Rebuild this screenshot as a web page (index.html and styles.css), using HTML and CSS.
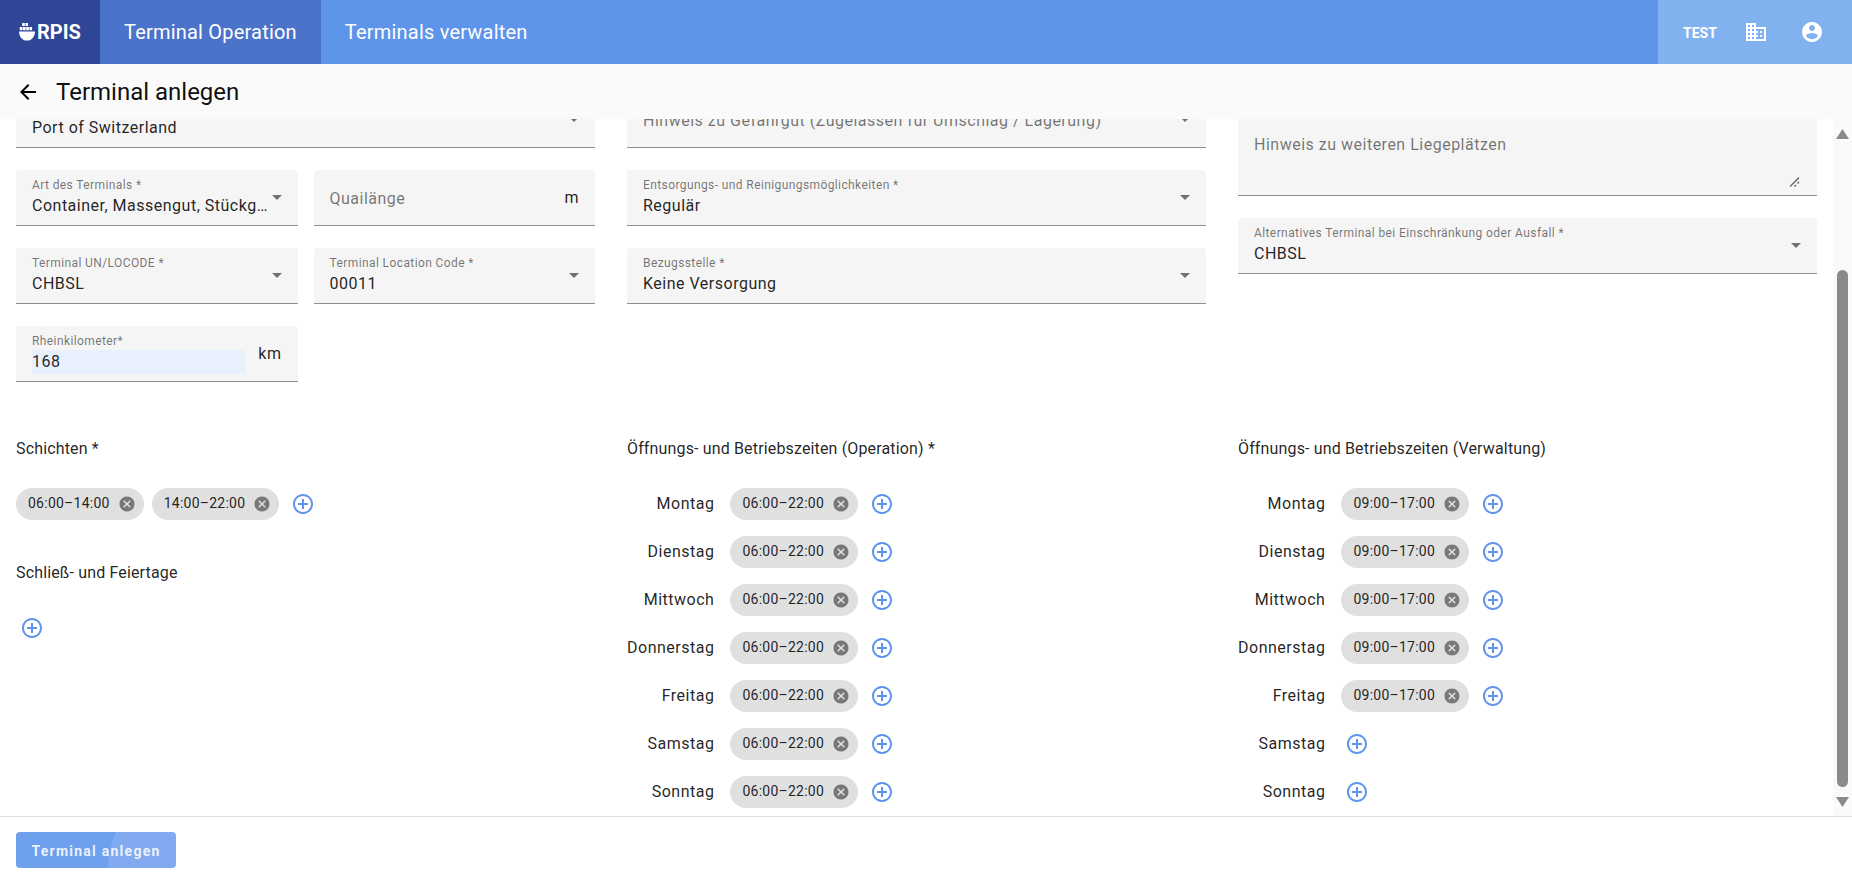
FILE: index.html
```html
<!DOCTYPE html>
<html lang="de">
<head>
	<meta charset="UTF-8">
	<title>Terminal anlegen</title>
	<link rel="stylesheet" href="styles.css">
</head>
<body>
	<svg class="defs" width="0" height="0">
		<symbol id="caret" viewBox="0 0 10 5"><path d="M0 0h10L5 5z"/></symbol>
		<symbol id="cancel" viewBox="0 0 24 24"><path d="M12 2C6.47 2 2 6.47 2 12s4.47 10 10 10 10-4.47 10-10S17.53 2 12 2zm5 13.59L15.59 17 12 13.41 8.41 17 7 15.59 10.59 12 7 8.41 8.41 7 12 10.59 15.59 7 17 8.41 13.41 12 17 15.59z"/></symbol>
		<symbol id="add" viewBox="0 0 24 24"><path d="M13 7h-2v4H7v2h4v4h2v-4h4v-2h-4V7zm-1-5C6.48 2 2 6.48 2 12s4.48 10 10 10 10-4.48 10-10S17.52 2 12 2zm0 18c-4.41 0-8-3.59-8-8s3.59-8 8-8 8 3.59 8 8-3.59 8-8 8z"/></symbol>
	</svg>

	<header class="topbar">
		<a class="logo" href="#">
			<svg class="logo-ship" viewBox="0 0 16 18"><path d="M3.2 0h2.6v3H3.200zM6.400 0H9v3H6.400zM.8 4h2.700v3.200H.8zM4 4h2.700v3.200H4zM7.200 4h2.700v3.200H7.200zM10.400 4h2.700v3.200h-2.700zM0 8.400h16c0 5-3.200 9.100-8 9.100S0 13.400 0 8.400z"/></svg>
			<span>RPIS</span>
		</a>
		<a class="tab tab-active" href="#">Terminal Operation</a>
		<a class="tab" href="#">Terminals verwalten</a>
		<div class="topbar-right">
			<span class="env">TEST</span>
			<svg class="top-icon" viewBox="0 0 24 24"><path d="M12 7V3H2v18h20V7H12zM6 19H4v-2h2v2zm0-4H4v-2h2v2zm0-4H4V9h2v2zm0-4H4V5h2v2zm4 12H8v-2h2v2zm0-4H8v-2h2v2zm0-4H8V9h2v2zm0-4H8V5h2v2zm10 12h-8v-2h2v-2h-2v-2h2v-2h-2V9h8v10zm-2-8h-2v2h2v-2zm0 4h-2v2h2v-2z"/></svg>
			<svg class="top-icon" viewBox="0 0 24 24"><path d="M12 2C6.48 2 2 6.48 2 12s4.48 10 10 10 10-4.48 10-10S17.52 2 12 2zm0 3c1.66 0 3 1.34 3 3s-1.34 3-3 3-3-1.34-3-3 1.34-3 3-3zm0 14.200c-2.500 0-4.710-1.280-6-3.220.030-1.990 4-3.080 6-3.080 1.990 0 5.970 1.090 6 3.080-1.290 1.940-3.500 3.220-6 3.220z"/></svg>
		</div>
	</header>

	<div class="subheader">
		<svg class="back" viewBox="0 0 24 24"><path d="M20 11H7.830l5.590-5.590L12 4l-8 8 8 8 1.410-1.410L7.830 13H20v-2z"/></svg>
		<h1>Terminal anlegen</h1>
	</div>

	<div class="main">
		<div class="content">
			<div class="fields">
				<div class="field-col split">
					<div class="field wide">
						<span class="value">Port of Switzerland</span>
						<svg class="caret"><use href="#caret"/></svg>
					</div>
					<div class="field">
						<label>Art des Terminals *</label>
						<span class="value">Container, Massengut, Stückgut</span>
						<svg class="caret"><use href="#caret"/></svg>
					</div>
					<div class="field empty">
						<span class="placeholder">Quailänge</span>
						<span class="unit">m</span>
					</div>
					<div class="field">
						<label>Terminal UN/LOCODE *</label>
						<span class="value">CHBSL</span>
						<svg class="caret"><use href="#caret"/></svg>
					</div>
					<div class="field">
						<label>Terminal Location Code *</label>
						<span class="value">00011</span>
						<svg class="caret"><use href="#caret"/></svg>
					</div>
					<div class="field">
						<label>Rheinkilometer*</label>
						<span class="value autofill">168</span>
						<span class="unit">km</span>
					</div>
				</div>
				<div class="field-col">
					<div class="field empty">
						<span class="placeholder">Hinweis zu Gefahrgut (Zugelassen für Umschlag / Lagerung)</span>
						<svg class="caret"><use href="#caret"/></svg>
					</div>
					<div class="field">
						<label>Entsorgungs- und Reinigungsmöglichkeiten *</label>
						<span class="value">Regulär</span>
						<svg class="caret"><use href="#caret"/></svg>
					</div>
					<div class="field">
						<label>Bezugsstelle *</label>
						<span class="value">Keine Versorgung</span>
						<svg class="caret"><use href="#caret"/></svg>
					</div>
				</div>
				<div class="field-col">
					<div class="field textarea">
						<span class="placeholder">Hinweis zu weiteren Liegeplätzen</span>
						<svg class="resizer" viewBox="0 0 10 10"><path d="M0 9.500L9 .5M4.500 9.500L6 8M7.500 6.500L9 5"/></svg>
					</div>
					<div class="field">
						<label>Alternatives Terminal bei Einschränkung oder Ausfall *</label>
						<span class="value">CHBSL</span>
						<svg class="caret"><use href="#caret"/></svg>
					</div>
				</div>
			</div>

			<div class="times">
				<section>
					<h2>Schichten *</h2>
					<div class="chips">
						<span class="chip">06:00–14:00<svg><use href="#cancel"/></svg></span>
						<span class="chip">14:00–22:00<svg><use href="#cancel"/></svg></span>
						<svg class="add"><use href="#add"/></svg>
					</div>
					<h2 class="second">Schließ- und Feiertage</h2>
					<div class="chips">
						<svg class="add"><use href="#add"/></svg>
					</div>
				</section>
				<section>
					<h2>Öffnungs- und Betriebszeiten (Operation) *</h2>
					<div class="days">
						<span class="day">Montag</span>
						<div class="chips"><span class="chip">06:00–22:00<svg><use href="#cancel"/></svg></span><svg class="add"><use href="#add"/></svg></div>
						<span class="day">Dienstag</span>
						<div class="chips"><span class="chip">06:00–22:00<svg><use href="#cancel"/></svg></span><svg class="add"><use href="#add"/></svg></div>
						<span class="day">Mittwoch</span>
						<div class="chips"><span class="chip">06:00–22:00<svg><use href="#cancel"/></svg></span><svg class="add"><use href="#add"/></svg></div>
						<span class="day">Donnerstag</span>
						<div class="chips"><span class="chip">06:00–22:00<svg><use href="#cancel"/></svg></span><svg class="add"><use href="#add"/></svg></div>
						<span class="day">Freitag</span>
						<div class="chips"><span class="chip">06:00–22:00<svg><use href="#cancel"/></svg></span><svg class="add"><use href="#add"/></svg></div>
						<span class="day">Samstag</span>
						<div class="chips"><span class="chip">06:00–22:00<svg><use href="#cancel"/></svg></span><svg class="add"><use href="#add"/></svg></div>
						<span class="day">Sonntag</span>
						<div class="chips"><span class="chip">06:00–22:00<svg><use href="#cancel"/></svg></span><svg class="add"><use href="#add"/></svg></div>
					</div>
				</section>
				<section>
					<h2>Öffnungs- und Betriebszeiten (Verwaltung)</h2>
					<div class="days">
						<span class="day">Montag</span>
						<div class="chips"><span class="chip">09:00–17:00<svg><use href="#cancel"/></svg></span><svg class="add"><use href="#add"/></svg></div>
						<span class="day">Dienstag</span>
						<div class="chips"><span class="chip">09:00–17:00<svg><use href="#cancel"/></svg></span><svg class="add"><use href="#add"/></svg></div>
						<span class="day">Mittwoch</span>
						<div class="chips"><span class="chip">09:00–17:00<svg><use href="#cancel"/></svg></span><svg class="add"><use href="#add"/></svg></div>
						<span class="day">Donnerstag</span>
						<div class="chips"><span class="chip">09:00–17:00<svg><use href="#cancel"/></svg></span><svg class="add"><use href="#add"/></svg></div>
						<span class="day">Freitag</span>
						<div class="chips"><span class="chip">09:00–17:00<svg><use href="#cancel"/></svg></span><svg class="add"><use href="#add"/></svg></div>
						<span class="day">Samstag</span>
						<div class="chips"><svg class="add"><use href="#add"/></svg></div>
						<span class="day">Sonntag</span>
						<div class="chips"><svg class="add"><use href="#add"/></svg></div>
					</div>
				</section>
			</div>
		</div>

		<div class="scrollbar">
			<svg class="scroll-arrow" viewBox="0 0 13 10"><path d="M6.500 0L13 10H0z"/></svg>
			<div class="scroll-thumb"></div>
			<svg class="scroll-arrow" viewBox="0 0 13 10"><path d="M0 0h13L6.500 10z"/></svg>
		</div>
	</div>

	<footer class="actions">
		<button class="primary" type="button">Terminal anlegen</button>
	</footer>
</body>
</html>
```

FILE: styles.css
```css
* {
	box-sizing: border-box;
}
html, body {
	height: 100%;
}
body {
	margin: 0;
	display: flex;
	flex-direction: column;
	overflow: hidden;
	background: #fff;
	color: rgba(0,0,0,.87);
	font: 16px/24px Roboto, "Liberation Sans", sans-serif;
}
.defs {
	position: absolute;
}

/* top bar */
.topbar {
	flex: none;
	height: 64px;
	display: flex;
	align-items: stretch;
	background: #5e94ea;
	color: #fff;
}
.topbar a {
	color: inherit;
	text-decoration: none;
}
.logo {
	width: 100px;
	display: flex;
	align-items: center;
	padding-left: 19px;
	background: #2f4596;
	font-size: 20px;
	font-weight: 700;
}
.logo-ship {
	width: 16px;
	height: 18px;
	margin-right: 2px;
	fill: #fff;
}
.tab {
	display: flex;
	align-items: center;
	padding: 0 24px;
	font-size: 20px;
	letter-spacing: .2px;
}
.tab-active {
	background: #4b73c9;
}
.topbar-right {
	margin-left: auto;
	width: 194px;
	display: flex;
	align-items: center;
	gap: 32px;
	padding-left: 25px;
	background: #82b1f0;
}
.env {
	width: 29px;
	padding-top: 2px;
	font-size: 14px;
	font-weight: 700;
}
.top-icon {
	width: 24px;
	height: 24px;
	fill: #fff;
}

/* sub header */
.subheader {
	flex: none;
	height: 55px;
	display: flex;
	align-items: center;
	padding-left: 16px;
	background: #fafafa;
	position: relative;
	z-index: 1;
}
.back {
	width: 24px;
	height: 24px;
	margin-right: 16px;
}
h1 {
	margin: 0;
	font-size: 24px;
	font-weight: 400;
	color: rgba(0,0,0,.95);
}

/* scroll area */
.main {
	flex: 1;
	min-height: 0;
	display: flex;
}
.content {
	flex: 1;
	min-width: 0;
	padding: 0 16px;
	overflow: hidden;
}
.scrollbar {
	flex: none;
	width: 19px;
	display: flex;
	flex-direction: column;
	align-items: center;
	background: #fafafa;
	padding-top: 10px;
}
.scroll-arrow {
	width: 13px;
	height: 10px;
	fill: #8a8a8a;
}
.scroll-thumb {
	width: 11px;
	height: 517px;
	margin: 131px 0 10px;
	border-radius: 6px;
	background: #8a8a8a;
}

/* fields */
.fields {
	display: grid;
	grid-template-columns: repeat(3, minmax(0, 1fr));
	column-gap: 32px;
	margin-top: -27px;
}
.field-col {
	display: flex;
	flex-direction: column;
	gap: 22px;
}
.split {
	display: grid;
	grid-template-columns: repeat(2, minmax(0, 1fr));
	column-gap: 16px;
	align-content: start;
}
.wide {
	grid-column: 1 / 3;
}
.field {
	height: 56px;
	position: relative;
	display: flex;
	align-items: center;
	padding: 0 16px;
	background: #f5f5f5;
	border-radius: 4px 4px 0 0;
	border-bottom: 1px solid #8f8f8f;
}
.field label {
	position: absolute;
	left: 16px;
	top: 7px;
	font-size: 12px;
	line-height: 16px;
	letter-spacing: .4px;
	color: rgba(0,0,0,.54);
	white-space: nowrap;
}
.value {
	display: block;
	flex: 1;
	min-width: 0;
	margin-top: 16px;
	letter-spacing: .5px;
	white-space: nowrap;
	overflow: hidden;
	text-overflow: ellipsis;
}
.placeholder {
	flex: 1;
	margin-top: 2px;
	letter-spacing: .5px;
	color: rgba(0,0,0,.54);
}
.caret {
	flex: none;
	width: 10px;
	height: 5px;
	fill: rgba(0,0,0,.54);
}
.unit {
	flex: none;
	margin-left: 13px;
	letter-spacing: .5px;
}
.autofill {
	background: #e8f0fe;
}
.textarea {
	height: 104px;
	align-items: flex-start;
	padding-top: 39px;
}
.resizer {
	position: absolute;
	right: 17px;
	bottom: 8px;
	width: 10px;
	height: 10px;
	fill: none;
	stroke: #555;
	stroke-width: 1.2;
}

/* times */
.times {
	display: grid;
	grid-template-columns: repeat(3, minmax(0, 1fr));
	column-gap: 32px;
	margin-top: 55px;
}
h2 {
	margin: 0 0 19px;
	font-size: 16px;
	font-weight: 400;
	letter-spacing: .15px;
	color: rgba(0,0,0,.87);
}
.second {
	margin-top: 33px;
}
.chips {
	height: 48px;
	display: flex;
	align-items: center;
	gap: 8px;
}
.chip {
	height: 32px;
	display: flex;
	align-items: center;
	padding: 0 8px 2px 12px;
	border-radius: 16px;
	background: #e0e0e0;
	font-size: 14px;
	letter-spacing: .25px;
	white-space: nowrap;
}
.chip svg {
	width: 18px;
	height: 18px;
	margin: 2px 0 0 8px;
	fill: #787878;
}
.add {
	width: 24px;
	height: 24px;
	margin-left: 4px;
	fill: #5e94ea;
}
.days {
	display: grid;
	grid-template-columns: max-content 1fr;
	column-gap: 16px;
	align-items: center;
}
.day {
	text-align: right;
	letter-spacing: .5px;
}

/* footer */
.actions {
	flex: none;
	height: 69px;
	display: flex;
	align-items: center;
	padding-left: 16px;
	padding-bottom: 2px;
	border-top: 1px solid #e0e0e0;
}
.primary {
	width: 160px;
	height: 36px;
	border: 0;
	border-radius: 4px;
	color: rgba(255,255,255,.87);
	background: radial-gradient(circle 120px at 211px 45px, #82aaf0 119.5px, #6fa0ee 120px);
	font: 700 14px/36px Roboto, "Liberation Sans", sans-serif;
	letter-spacing: 1.25px;
}
```
